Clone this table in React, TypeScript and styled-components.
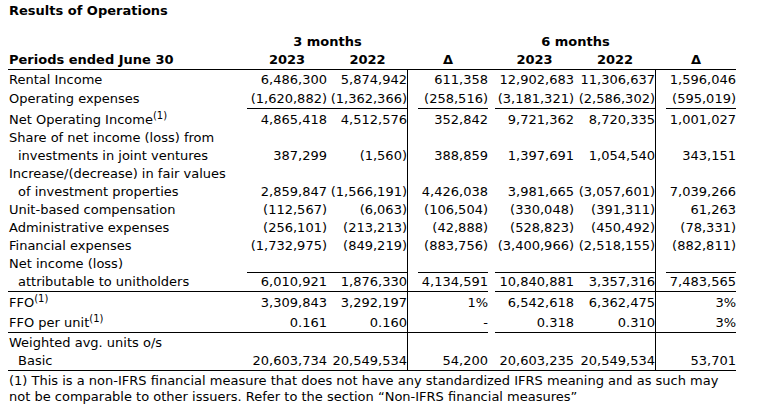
import * as React from "react";
import styled, { createGlobalStyle } from "styled-components";

const GlobalStyle = createGlobalStyle`
  body {
    margin: 0;
    background: #ffffff;
    color: #000000;
    font-family: "DejaVu Sans", Verdana, sans-serif;
    font-size: 13px;
  }
`;

type Line = "none" | "sub" | "rule";

interface RowData {
  label: string;
  sup?: boolean;
  indent?: boolean;
  values?: string[];
  line?: Line;
  pad?: number;
}

const rows: RowData[] = [
  {
    label: "Rental Income",
    pad: 1,
    values: ["6,486,300", "5,874,942", "611,358", "12,902,683", "11,306,637", "1,596,046"],
  },
  {
    label: "Operating expenses",
    pad: 1,
    values: ["(1,620,882)", "(1,362,366)", "(258,516)", "(3,181,321)", "(2,586,302)", "(595,019)"],
    line: "sub",
  },
  {
    label: "Net Operating Income",
    sup: true,
    values: ["4,865,418", "4,512,576", "352,842", "9,721,362", "8,720,335", "1,001,027"],
  },
  { label: "Share of net income (loss) from" },
  {
    label: "investments in joint ventures",
    indent: true,
    values: ["387,299", "(1,560)", "388,859", "1,397,691", "1,054,540", "343,151"],
  },
  { label: "Increase/(decrease) in fair values" },
  {
    label: "of investment properties",
    indent: true,
    values: ["2,859,847", "(1,566,191)", "4,426,038", "3,981,665", "(3,057,601)", "7,039,266"],
  },
  {
    label: "Unit-based compensation",
    values: ["(112,567)", "(6,063)", "(106,504)", "(330,048)", "(391,311)", "61,263"],
  },
  {
    label: "Administrative expenses",
    values: ["(256,101)", "(213,213)", "(42,888)", "(528,823)", "(450,492)", "(78,331)"],
  },
  {
    label: "Financial expenses",
    values: ["(1,732,975)", "(849,219)", "(883,756)", "(3,400,966)", "(2,518,155)", "(882,811)"],
  },
  { label: "Net income (loss)", line: "sub" },
  {
    label: "attributable to unitholders",
    indent: true,
    values: ["6,010,921", "1,876,330", "4,134,591", "10,840,881", "3,357,316", "7,483,565"],
    line: "rule",
  },
  {
    label: "FFO",
    sup: true,
    values: ["3,309,843", "3,292,197", "1%", "6,542,618", "6,362,475", "3%"],
  },
  {
    label: "FFO per unit",
    sup: true,
    values: ["0.161", "0.160", "-", "0.318", "0.310", "3%"],
    line: "rule",
  },
  { label: "Weighted avg. units o/s", pad: 1 },
  {
    label: "Basic",
    indent: true,
    values: ["20,603,734", "20,549,534", "54,200", "20,603,235", "20,549,534", "53,701"],
  },
];

const Page = styled.div`
  padding: 2px 8px 0;
  width: 728px;
`;

const Title = styled.div`
  font-weight: bold;
  line-height: 18px;
  padding-left: 1px;
  margin-bottom: 13px;
`;

const Row = styled.div<{ $rule?: boolean }>`
  display: grid;
  grid-template-columns: 239px 80px 81px 80px 7px 79px 82px 80px;
  line-height: 18px;
  ${(p) => (p.$rule ? "border-bottom: 1px solid #000;" : "")}
`;

const Label = styled.div<{ $indent?: boolean; $bold?: boolean; $line?: Line; $pad?: number }>`
  padding-left: ${(p) => (p.$indent ? 10 : 1)}px;
  padding-top: ${(p) => p.$pad ?? 0}px;
  font-weight: ${(p) => (p.$bold ? "bold" : "normal")};
  white-space: nowrap;
  ${(p) => (p.$line === "rule" ? "border-bottom: 1px solid #000;" : "")}
`;

const Group = styled.div<{ $col: number }>`
  grid-column: ${(p) => p.$col} / span 2;
  text-align: center;
  font-weight: bold;
`;

const Head = styled.div`
  text-align: center;
  font-weight: bold;
`;

const Value = styled.div<{ $line: Line; $delta?: boolean; $divider?: boolean; $pad?: number }>`
  text-align: right;
  white-space: nowrap;
  padding-top: ${(p) => p.$pad ?? 0}px;
  ${(p) => (p.$line !== "none" ? "border-bottom: 1px solid #000;" : "")}
  ${(p) => (p.$divider ? "border-right: 1px solid #000;" : "")}
  ${(p) => (p.$delta && p.$line === "sub" ? "margin-left: 10px;" : "")}
`;

const Sup = styled.sup`
  font-size: 10px;
  line-height: 0;
  vertical-align: 5px;
`;

const Footnote = styled.div`
  border-top: 1px solid #000;
  line-height: 16px;
  padding: 2px 0 0 1px;
`;

const DataRow = ({ row }: { row: RowData }) => {
  const line = row.line ?? "none";
  const pad = row.pad ?? (row.sup ? 2 : 0);
  const v = row.values ?? ["", "", "", "", "", ""];
  return (
    <Row>
      <Label $indent={row.indent} $line={line} $pad={pad}>
        {row.label}
        {row.sup && <Sup>(1)</Sup>}
      </Label>
      <Value $line={line} $pad={pad}>
        {v[0]}
      </Value>
      <Value $line={line} $pad={pad} $divider>
        {v[1]}
      </Value>
      <Value $line={line} $pad={pad} $delta>
        {v[2]}
      </Value>
      <div />
      <Value $line={line} $pad={pad}>
        {v[3]}
      </Value>
      <Value $line={line} $pad={pad} $divider>
        {v[4]}
      </Value>
      <Value $line={line} $pad={pad} $delta>
        {v[5]}
      </Value>
    </Row>
  );
};

export default function App() {
  return (
    <Page>
      <GlobalStyle />
      <Title>Results of Operations</Title>
      <Row>
        <div />
        <Group $col={2}>3 months</Group>
        <Group $col={6}>6 months</Group>
      </Row>
      <Row $rule>
        <Label $bold>Periods ended June 30</Label>
        <Head>2023</Head>
        <Head>2022</Head>
        <Head>Δ</Head>
        <div />
        <Head>2023</Head>
        <Head>2022</Head>
        <Head>Δ</Head>
      </Row>
      {rows.map((row) => (
        <DataRow key={row.label} row={row} />
      ))}
      <Footnote>
        (1) This is a non-IFRS financial measure that does not have any standardized IFRS meaning and as such may
        not be comparable to other issuers. Refer to the section “Non-IFRS financial measures”
      </Footnote>
    </Page>
  );
}
